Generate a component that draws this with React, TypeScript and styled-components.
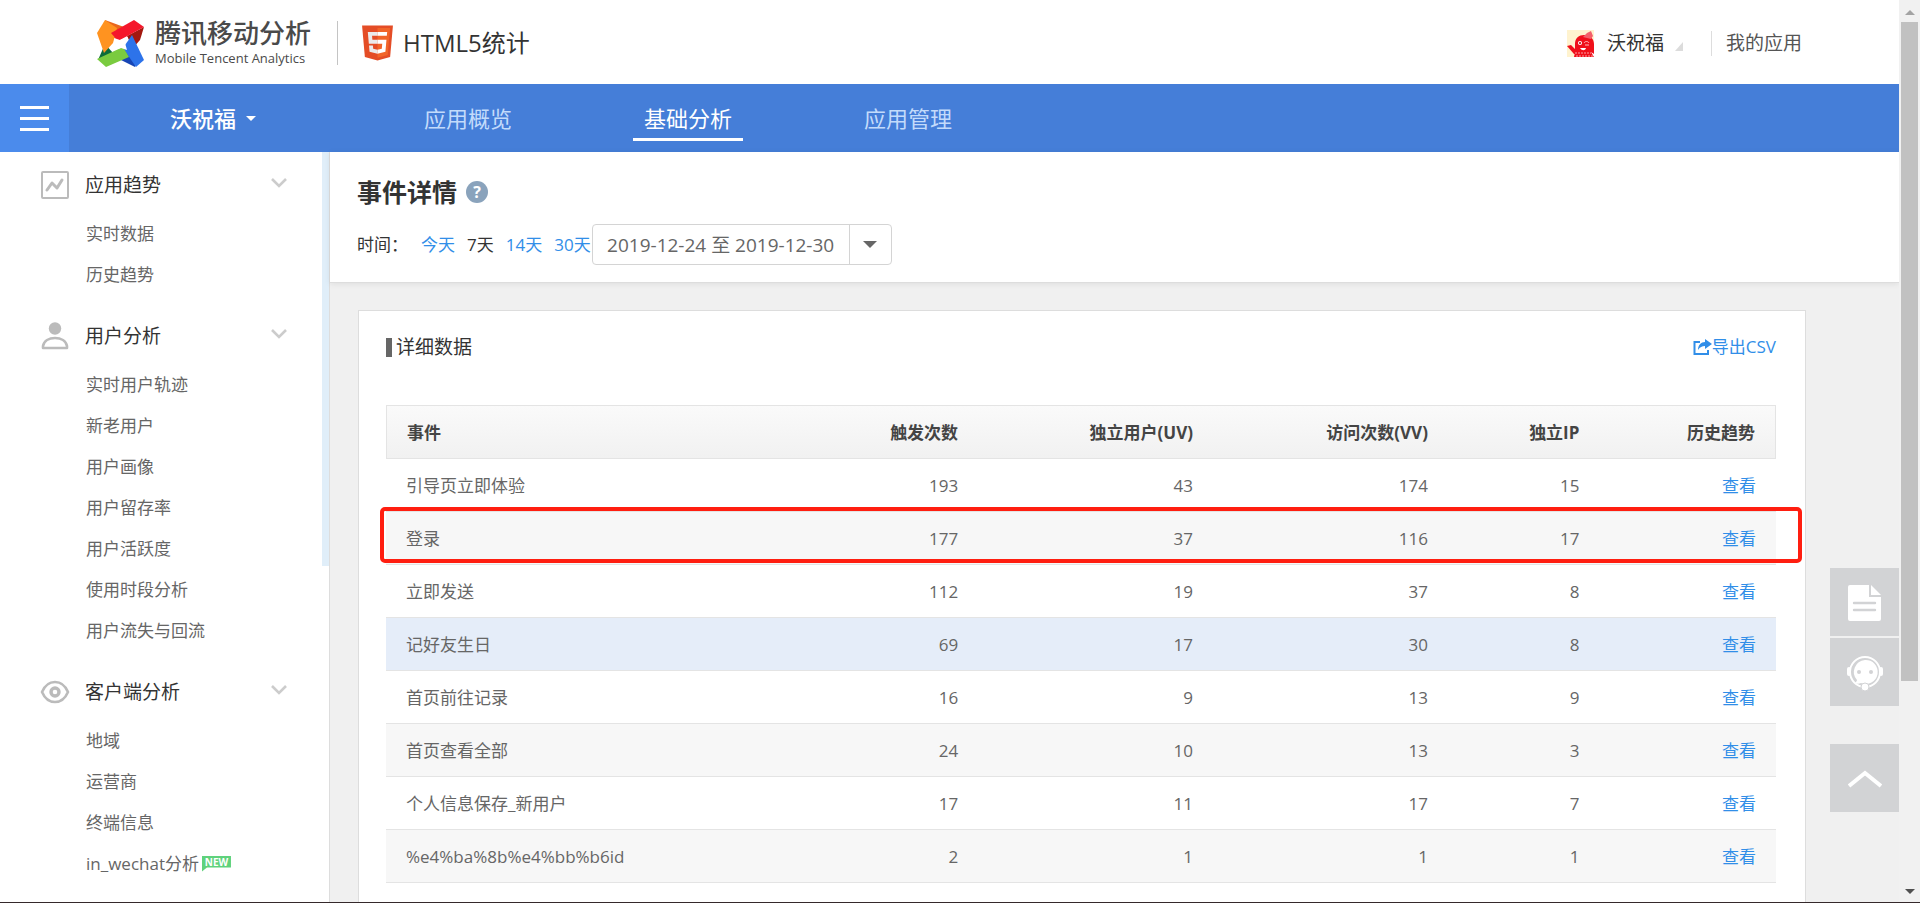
import React from "react";
import styled, { createGlobalStyle, css } from "styled-components";

const GlobalStyle = createGlobalStyle`
  *, *::before, *::after { box-sizing: border-box; }
  body {
    margin: 0;
    background: #f0f0f0;
    color: #333;
    font-family: "Open Sans", "Noto Sans CJK SC", sans-serif;
    font-size: 17px;
    line-height: 24px;
  }
  a { color: #318ee8; text-decoration: none; }
  h1, h2, h3, ul { margin: 0; padding: 0; font-weight: 400; }
  ul { list-style: none; }
  button { border: 0; padding: 0; background: none; font: inherit; color: inherit; cursor: pointer; }
  svg { display: block; flex: none; }
`;

const Window = styled.div`
  display: flex;
  height: 100vh;
  overflow: hidden;
  border-bottom: 1px solid #35292b;
`;

const Page = styled.div`
  flex: 1;
  min-width: 0;
  display: flex;
  flex-direction: column;
`;

/* top header */

const Header = styled.header`
  flex: none;
  display: flex;
  align-items: center;
  height: 84px;
  padding: 2px 97px 0;
  background: #fff;
`;

const Brand = styled.a`
  display: flex;
  align-items: center;
  gap: 11px;
  color: #4a4a4a;
`;

const BrandText = styled.span`
  display: flex;
  flex-direction: column;
  white-space: nowrap;
`;

const BrandName = styled.strong`
  font-family: "Liberation Sans", "Noto Sans CJK SC", sans-serif;
  font-size: 26px;
  line-height: 30px;
  font-weight: 500;
`;

const BrandSub = styled.small`
  font-size: 13px;
  line-height: 18px;
  font-weight: 500;
`;

const Divider = styled.span<{ $tall?: boolean }>`
  width: 1px;
  height: ${(p) => (p.$tall ? 44 : 25)}px;
  margin-right: 14px;
  background: ${(p) => (p.$tall ? "#c4c4c4" : "#ddd")};
`;

const Product = styled.div`
  display: flex;
  align-items: center;
  gap: 10px;
  margin-left: 26px;
  font-size: 24px;
  line-height: 32px;
`;

const Account = styled.div`
  display: flex;
  align-items: center;
  margin-left: auto;
  font-size: 19px;
  a { color: #555; }
`;

const UserButton = styled.button`
  display: flex;
  align-items: center;
  gap: 13px;
  margin-right: 28px;
  color: #333;
`;

const CornerMark = styled.span`
  align-self: flex-end;
  margin: 0 0 6px -2px;
  border-left: 8px solid transparent;
  border-bottom: 9px solid #dcdcdc;
`;

/* blue navigation */

const Nav = styled.nav`
  flex: none;
  display: flex;
  align-items: center;
  height: 68px;
  background: #457ed8;
  font-size: 22px;
  line-height: 32px;
`;

const MenuButton = styled.button`
  display: flex;
  flex-direction: column;
  align-items: center;
  justify-content: center;
  gap: 8px;
  width: 69px;
  height: 68px;
  background: #4b8bec;
  span { width: 29px; height: 3px; background: #fff; }
`;

const AppButton = styled.button`
  display: flex;
  align-items: center;
  gap: 10px;
  width: 344px;
  padding-left: 101px;
  color: #fff;
  font-weight: 500;
`;

const Caret = styled.span<{ $size: number }>`
  border: ${(p) => p.$size}px solid transparent;
  border-top-color: currentColor;
  border-bottom: 0;
`;

const Tabs = styled.div`
  display: flex;
  gap: 110px;
`;

const Tab = styled.a<{ $active?: boolean }>`
  width: 110px;
  padding: 7px 0 4px;
  text-align: center;
  color: ${(p) => (p.$active ? "#fff" : "#c3dbfb")};
  border-bottom: 3px solid ${(p) => (p.$active ? "#fff" : "transparent")};
`;

/* sidebar */

const Body = styled.div`
  flex: 1;
  min-height: 0;
  display: flex;
`;

const Sidebar = styled.aside`
  flex: none;
  display: flex;
  width: 330px;
  overflow: hidden;
  background: #fff;
  border-right: 1px solid #ddd;
`;

const SideMenu = styled.div`
  flex: 1;
  padding-top: 5px;
`;

const SideRail = styled.div`
  width: 7px;
  height: 414px;
  background: #e0eef9;
`;

const Group = styled.section`
  margin-bottom: 13px;
`;

const GroupHead = styled.button`
  display: flex;
  align-items: center;
  width: 100%;
  height: 56px;
  padding: 0 35px 0 40px;
  text-align: left;
  font-size: 19px;
  span { flex: 1; margin-left: 15px; }
`;

const ChevronBox = styled.i`
  padding-bottom: 5px;
`;

const SideItem = styled.li`
  display: flex;
  align-items: center;
  gap: 3px;
  height: 41px;
  padding-left: 86px;
  a { color: #666; }
`;

const NewBadge = styled.em`
  width: 29px;
  height: 16px;
  background: #5fd27c;
  clip-path: polygon(0 0, 100% 0, 100% 12px, 5px 12px, 0 16px);
  color: #fff;
  font-size: 10px;
  line-height: 12px;
  font-style: normal;
  font-weight: 700;
  text-align: center;
`;

/* main area */

const Main = styled.main`
  flex: 1;
  min-width: 0;
  display: flex;
  flex-direction: column;
`;

const PageHead = styled.div`
  flex: none;
  padding: 24px 27px 17px;
  background: #fff;
  border-bottom: 1px solid #ddd;
  box-shadow: 0 1px 6px rgba(0, 0, 0, 0.08);
`;

const TitleRow = styled.div`
  display: flex;
  align-items: center;
  gap: 9px;
  height: 32px;
  h1 { font-size: 25px; line-height: 32px; font-weight: 700; }
`;

const Help = styled.button`
  width: 22px;
  height: 22px;
  border-radius: 50%;
  background: #8aa3bc;
  color: #fff;
  font-size: 16px;
  line-height: 22px;
  font-weight: 700;
`;

const TimeRow = styled.div`
  display: flex;
  align-items: center;
  margin-top: 16px;
`;

const Ranges = styled.div`
  display: flex;
  gap: 12px;
  margin: 0 1px 0 13px;
`;

const Range = styled.a<{ $active?: boolean }>`
  ${(p) => p.$active && css`color: #333;`}
`;

const DateBox = styled.button`
  display: flex;
  align-items: center;
  width: 300px;
  height: 41px;
  border: 1px solid #d4d4d4;
  border-radius: 4px;
  background: #fff;
  color: #666;
  font-size: 19px;
`;

const DateText = styled.span`
  flex: 1;
  text-align: center;
  white-space: nowrap;
`;

const DateCaret = styled.span`
  display: flex;
  align-items: center;
  justify-content: center;
  width: 42px;
  height: 39px;
  border-left: 1px solid #d4d4d4;
`;

const Card = styled.section`
  flex: 1;
  margin: 27px 93px 0 28px;
  padding: 24px 29px 0 27px;
  background: #fff;
  border: 1px solid #ddd;
  border-bottom: 0;
`;

const CardHead = styled.div`
  display: flex;
  align-items: center;
  justify-content: space-between;
  height: 24px;
  margin-bottom: 46px;
  a { display: flex; align-items: center; }
`;

const CardTitle = styled.h2`
  display: flex;
  align-items: center;
  gap: 4px;
  font-size: 19px;
  &::before { content: ""; width: 6px; height: 19px; background: #666; }
`;

const Table = styled.table`
  width: 100%;
  table-layout: fixed;
  border-collapse: separate;
  border-spacing: 0;
  color: #666;
  text-align: right;
  th, td { padding: 2px 20px 0; font-weight: 400; border-bottom: 1px solid #e4e4e4; }
  th:first-child { text-align: left; white-space: nowrap; }
  thead th {
    height: 54px;
    background: linear-gradient(#fafafa, #f1f1f1);
    border-top: 1px solid #e4e4e4;
    color: #444;
    font-weight: 700;
  }
  thead th:first-child { border-left: 1px solid #e4e4e4; }
  thead th:last-child { border-right: 1px solid #e4e4e4; }
`;

const Row = styled.tr<{ $tone: "plain" | "stripe" | "hover" }>`
  position: relative;
  height: 53px;
  background: ${(p) => ({ plain: "#fff", stripe: "#f7f7f7", hover: "#e5edf9" })[p.$tone]};
`;

const Marker = styled.span`
  position: absolute;
  inset: -5px -26px 2px -6px;
  border: 4px solid #ff1e10;
  border-radius: 5px;
  pointer-events: none;
`;

/* floating tools */

const Tools = styled.div`
  position: fixed;
  right: 21px;
  bottom: 91px;
  display: flex;
  flex-direction: column;
  gap: 2px;
`;

const Tool = styled.button<{ $apart?: boolean }>`
  display: flex;
  align-items: center;
  justify-content: center;
  width: 69px;
  height: 68px;
  margin-top: ${(p) => (p.$apart ? 36 : 0)}px;
  padding-top: 2px;
  background: #d2d3d5;
`;

/* window scroll bar */

const ScrollBar = styled.div`
  flex: none;
  display: flex;
  flex-direction: column;
  align-items: center;
  width: 21px;
  padding: 10px 0 8px;
  background: #f1f1f1;
`;

const ScrollArrow = styled.span<{ $down?: boolean }>`
  border: 5px solid transparent;
  ${(p) =>
    p.$down
      ? css`border-top-color: #505050; border-bottom: 0;`
      : css`border-bottom-color: #a3a3a3; border-top: 0;`}
`;

const ScrollTrack = styled.div`
  flex: 1;
  padding-top: 7px;
`;

const ScrollThumb = styled.div`
  width: 17px;
  height: 76%;
  background: #c1c1c1;
`;

/* drawings */

const MtaLogo = () => (
  <svg width="47" height="47" viewBox="0 0 47 47" aria-hidden="true">
    <path fill="#0d6b3a" d="M8 24l8 9L1 40z" />
    <path fill="#e9661d" d="M8 0l19 7-7 14-8-8z" />
    <path fill="#ff9320" d="M8 0l12 8-4 15-9 10L0 13z" />
    <path fill="#a3180f" d="M47 7l-4 13-7 8-6-12z" />
    <path fill="#f5172b" d="M37 0l10 7-26 14-7-8z" />
    <path fill="#1745b5" d="M26 28l15 12-3 7-16-8z" />
    <path fill="#2d73ea" d="M35 15l12 25-8 7-13-19z" />
    <path fill="#7acb3f" d="M26 27l6 10L9 47 0 39z" />
    <path fill="#fff" d="M17 18l6 2 8-3-3 6 2 7-6-2-7 2 2-7z" />
  </svg>
);

const Html5Logo = () => (
  <svg width="31" height="36" viewBox="74 100 364 412" aria-hidden="true">
    <path fill="#E44D26" d="M107.644 470.877L74.633 100.62h362.734L404.321 470.82 255.778 512z" />
    <path fill="#F16529" d="M256 480.523l120.03-33.277 28.24-316.352H256z" />
    <path fill="#EBEBEB" d="M256 268.217h-60.09l-4.15-46.501H256v-45.411H142.132l1.087 12.183 11.161 125.139H256zM256 386.153l-.199.053-50.574-13.656-3.233-36.217h-45.585l6.362 71.301 93.02 25.823.209-.058z" />
    <path fill="#FFF" d="M255.843 268.217v45.41h55.918l-5.271 58.894-50.647 13.67v47.244l93.094-25.801.683-7.672 10.671-119.551 1.108-12.197h-12.237zM255.843 176.305v45.411h109.688l.911-10.207 2.069-23.021 1.086-12.183z" />
  </svg>
);

const Avatar = () => (
  <svg width="27" height="27" viewBox="0 0 27 27" aria-hidden="true">
    <path fill="#fff3cf" d="M0 0h27v27H0z" />
    <path fill="#f0101a" d="M0 16l4-1 5 5 1 4-3 0zM8 14c0-6 4-9 9-9s10 3 10 9v13H7l1-5z" />
    <path fill="#f4606a" d="M16 7l4-4 4-2 2 5-2 3z" />
    <circle cx="13" cy="13" r="2" fill="#fff" />
    <circle cx="13" cy="13" r="1" fill="#a00" />
    <path d="M17 13c1-2 4-2 5 0M18 15h4" stroke="#fbb" fill="none" />
    <path d="M13 18c2 3 5 3 6 0z" fill="#fff" />
    <path d="M8 23h16M9 26h17" stroke="#f9a0a4" strokeDasharray="2 1" />
    <path d="M24 22l3 2v3z" fill="#fff" />
  </svg>
);

const line = { fill: "none", stroke: "#bbb", strokeLinecap: "round", strokeLinejoin: "round" } as const;

const TrendIcon = () => (
  <svg width="30" height="28" viewBox="0 0 30 28" aria-hidden="true" {...line} strokeWidth="2">
    <rect x="2" y="1" width="26" height="26" rx="1" />
    <path d="M7 19l5-7 5 5 5-8" strokeWidth="3" />
  </svg>
);

const UserIcon = () => (
  <svg width="30" height="28" viewBox="0 0 30 28" aria-hidden="true" {...line} strokeWidth="2.6">
    <circle cx="15" cy="6.500" r="6.200" fill="#bbb" stroke="none" />
    <path d="M3 26v-2c1-5 6-8 12-8s11 3 12 8v2z" />
  </svg>
);

const EyeIcon = () => (
  <svg width="30" height="24" viewBox="0 0 30 24" aria-hidden="true" {...line} strokeWidth="2.6">
    <path d="M2 12C5 5 10 2 15 2s10 3 13 10c-3 7-8 10-13 10S5 19 2 12z" />
    <circle cx="15" cy="12" r="4" strokeWidth="3.4" />
  </svg>
);

const Chevron = () => (
  <ChevronBox>
    <svg width="16" height="10" viewBox="0 0 16 10" aria-hidden="true" fill="none" stroke="#ccc" strokeWidth="2.6">
      <path d="M1 1l7 7 7-7" />
    </svg>
  </ChevronBox>
);

const ExportIcon = () => (
  <svg width="19" height="16" viewBox="0 0 19 16" aria-hidden="true">
    <path d="M7 3H1.500v12H15v-4" fill="none" stroke="#318ee8" strokeWidth="2" />
    <path d="M12 0l7 5-7 5V7c-3 0-5 1-7 4 0-5 3-8 7-8z" fill="#318ee8" />
  </svg>
);

const NoteIcon = () => (
  <svg width="34" height="36" viewBox="0 0 34 36" aria-hidden="true">
    <path d="M2 0h19v12h12v22a2 2 0 0 1-2 2H2a2 2 0 0 1-2-2V2a2 2 0 0 1 2-2z" fill="#fff" />
    <path d="M23 0l10 10H23z" fill="#fff" />
    <path d="M6 18h21M6 25h21" stroke="#d2d3d5" strokeWidth="2.4" strokeLinecap="round" />
  </svg>
);

const ServiceIcon = () => (
  <svg width="36" height="36" viewBox="0 0 36 36" aria-hidden="true">
    <circle cx="18" cy="17" r="15" fill="none" stroke="#fff" strokeWidth="2" />
    <path d="M18 5a12 12 0 1 1-4 23c-2 1-4 1-6 0 1-1 2-2 2-3A12 12 0 0 1 18 5z" fill="#fff" />
    <rect x="0" y="12" width="4" height="9" rx="2" fill="#fff" />
    <rect x="32" y="12" width="4" height="9" rx="2" fill="#fff" />
    <circle cx="12" cy="17" r="2" fill="#d2d3d5" />
    <circle cx="24" cy="17" r="2" fill="#d2d3d5" />
    <circle cx="18" cy="32" r="4" fill="#fff" stroke="#d2d3d5" />
  </svg>
);

const UpIcon = () => (
  <svg width="34" height="18" viewBox="0 0 34 18" aria-hidden="true" fill="none" stroke="#fff" strokeWidth="4">
    <path d="M1 16L17 3l16 13" />
  </svg>
);

const groups = [
  { title: "应用趋势", icon: <TrendIcon />, items: ["实时数据", "历史趋势"] },
  {
    title: "用户分析",
    icon: <UserIcon />,
    items: ["实时用户轨迹", "新老用户", "用户画像", "用户留存率", "用户活跃度", "使用时段分析", "用户流失与回流"],
  },
  { title: "客户端分析", icon: <EyeIcon />, items: ["地域", "运营商", "终端信息", "in_wechat分析"] },
];

const columns = [
  { label: "事件", width: "25.6%" },
  { label: "触发次数", width: "17%" },
  { label: "独立用户(UV)", width: "16.9%" },
  { label: "访问次数(VV)", width: "16.9%" },
  { label: "独立IP", width: "10.9%" },
  { label: "历史趋势", width: "12.7%" },
];

type Event = { name: string; values: number[]; marked?: boolean; hovered?: boolean };

const events: Event[] = [
  { name: "引导页立即体验", values: [193, 43, 174, 15] },
  { name: "登录", values: [177, 37, 116, 17], marked: true },
  { name: "立即发送", values: [112, 19, 37, 8] },
  { name: "记好友生日", values: [69, 17, 30, 8], hovered: true },
  { name: "首页前往记录", values: [16, 9, 13, 9] },
  { name: "首页查看全部", values: [24, 10, 13, 3] },
  { name: "个人信息保存_新用户", values: [17, 11, 17, 7] },
  { name: "%e4%ba%8b%e4%bb%b6id", values: [2, 1, 1, 1] },
];

export default function App() {
  return (
    <>
      <GlobalStyle />
      <Window>
        <Page>
          <Header>
            <Brand href="#">
              <MtaLogo />
              <BrandText>
                <BrandName>腾讯移动分析</BrandName>
                <BrandSub>Mobile Tencent Analytics</BrandSub>
              </BrandText>
            </Brand>
            <Product>
              <Divider $tall />
              <Html5Logo />
              HTML5统计
            </Product>
            <Account>
              <UserButton type="button">
                <Avatar />
                沃祝福
                <CornerMark />
              </UserButton>
              <Divider />
              <a href="#">我的应用</a>
            </Account>
          </Header>

          <Nav>
            <MenuButton type="button" aria-label="菜单">
              <span />
              <span />
              <span />
            </MenuButton>
            <AppButton type="button">
              沃祝福
              <Caret $size={5} />
            </AppButton>
            <Tabs>
              <Tab href="#">应用概览</Tab>
              <Tab href="#" $active aria-current="page">基础分析</Tab>
              <Tab href="#">应用管理</Tab>
            </Tabs>
          </Nav>

          <Body>
            <Sidebar>
              <SideMenu>
                {groups.map((g) => (
                  <Group key={g.title}>
                    <GroupHead type="button" aria-expanded="true">
                      {g.icon}
                      <span>{g.title}</span>
                      <Chevron />
                    </GroupHead>
                    <ul>
                      {g.items.map((item) => (
                        <SideItem key={item}>
                          <a href="#">{item}</a>
                          {item.startsWith("in_wechat") && <NewBadge>NEW</NewBadge>}
                        </SideItem>
                      ))}
                    </ul>
                  </Group>
                ))}
              </SideMenu>
              <SideRail />
            </Sidebar>

            <Main>
              <PageHead>
                <TitleRow>
                  <h1>事件详情</h1>
                  <Help type="button">?</Help>
                </TitleRow>
                <TimeRow>
                  时间：
                  <Ranges>
                    <Range href="#">今天</Range>
                    <Range href="#" $active>7天</Range>
                    <Range href="#">14天</Range>
                    <Range href="#">30天</Range>
                  </Ranges>
                  <DateBox type="button">
                    <DateText>2019-12-24 至 2019-12-30</DateText>
                    <DateCaret>
                      <Caret $size={7} />
                    </DateCaret>
                  </DateBox>
                </TimeRow>
              </PageHead>

              <Card>
                <CardHead>
                  <CardTitle>详细数据</CardTitle>
                  <a href="#">
                    <ExportIcon />
                    导出CSV
                  </a>
                </CardHead>
                <Table>
                  <colgroup>
                    {columns.map((c) => (
                      <col key={c.label} width={c.width} />
                    ))}
                  </colgroup>
                  <thead>
                    <tr>
                      {columns.map((c) => (
                        <th key={c.label} scope="col">{c.label}</th>
                      ))}
                    </tr>
                  </thead>
                  <tbody>
                    {events.map((e, i) => (
                      <Row key={e.name} $tone={e.hovered ? "hover" : i % 2 ? "stripe" : "plain"}>
                        <th scope="row">
                          {e.name}
                          {e.marked && <Marker />}
                        </th>
                        {e.values.map((v, n) => (
                          <td key={n}>{v}</td>
                        ))}
                        <td>
                          <a href="#">查看</a>
                        </td>
                      </Row>
                    ))}
                  </tbody>
                </Table>
              </Card>
            </Main>
          </Body>
        </Page>

        <ScrollBar aria-hidden="true">
          <ScrollArrow />
          <ScrollTrack>
            <ScrollThumb />
          </ScrollTrack>
          <ScrollArrow $down />
        </ScrollBar>
      </Window>

      <Tools>
        <Tool type="button" aria-label="文档">
          <NoteIcon />
        </Tool>
        <Tool type="button" aria-label="客服">
          <ServiceIcon />
        </Tool>
        <Tool type="button" aria-label="返回顶部" $apart>
          <UpIcon />
        </Tool>
      </Tools>
    </>
  );
}
